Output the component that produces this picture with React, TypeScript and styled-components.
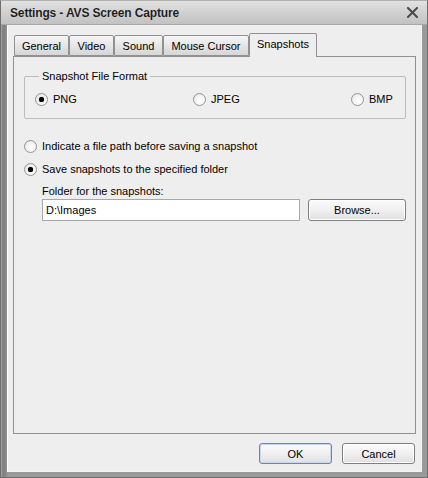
import React from "react";
import styled, { createGlobalStyle } from "styled-components";

const Global = createGlobalStyle`
  html, body { margin: 0; padding: 0; background: #8c8c8c; }
  body { font-family: "Liberation Sans", Arial, sans-serif; font-size: 11px; color: #000; }
  * { box-sizing: border-box; }
`;

const Window = styled.div`
  width: 428px;
  height: 478px;
  display: flex;
  flex-direction: column;
  background: linear-gradient(to right, #a6a6a6 0, #7e7e7e 2px, #8a8a8a 5px, #9a9a9a 7px);
  border: 1px solid #6e6e6e;
  border-top-color: #b0b0b0;
`;

const TitleBar = styled.div`
  height: 24px;
  flex: none;
  display: flex;
  align-items: center;
  justify-content: space-between;
  padding: 0 8px 0 9px;
  background: linear-gradient(to bottom, #e2e2e2 0%, #d2d2d2 45%, #c2c2c2 100%);
  border-bottom: 1px solid #a8a8a8;
`;

const Title = styled.span`
  font-weight: bold;
  font-size: 12px;
  letter-spacing: -0.15px;
  color: #1e1e1e;
  text-shadow: 0 0 1px rgba(255, 255, 255, 0.6);
`;

const Close = styled.button`
  width: 14px;
  height: 14px;
  padding: 0;
  border: 0;
  background: none;
  display: flex;
  align-items: center;
  justify-content: center;
`;

const FrameBody = styled.div`
  flex: 1;
  display: flex;
  padding: 0 6px 5px 6px;
`;

const Client = styled.div`
  flex: 1;
  display: flex;
  flex-direction: column;
  background: #eeeeee;
  border: 1px solid #ffffff;
  border-top: 0;
  border-right-color: #f4f4f4;
  border-bottom-color: #f4f4f4;
  padding: 8px 5px 7px 5px;
`;

const TabStrip = styled.div`
  display: flex;
  align-items: flex-end;
  height: 23px;
  padding-left: 1px;
  position: relative;
  z-index: 1;
`;

const Tab = styled.div<{ $active?: boolean; $w: number }>`
  width: ${(p) => p.$w}px;
  height: ${(p) => (p.$active ? "24px" : "21px")};
  margin-bottom: ${(p) => (p.$active ? "-1px" : "0")};
  display: flex;
  align-items: center;
  justify-content: center;
  border: 1px solid #919191;
  border-bottom: ${(p) => (p.$active ? "0" : "1px solid #919191")};
  border-radius: 2px 2px 0 0;
  background: ${(p) =>
    p.$active ? "#eeeeee" : "linear-gradient(to bottom, #f6f6f6 0%, #e6e6e6 50%, #d6d6d6 100%)"};
  color: #000;
  padding-bottom: ${(p) => (p.$active ? "3px" : "0")};
`;

const Panel = styled.div`
  height: 378px;
  border: 1px solid #919191;
  background: #eeeeee;
  padding: 13px 9px 0 10px;
  display: flex;
  flex-direction: column;
`;

const Group = styled.fieldset`
  margin: 0;
  padding: 10px 0 0 10px;
  height: 49px;
  border: 1px solid #bcbcbc;
  border-radius: 2px;
`;

const Legend = styled.legend`
  padding: 0 3px 0 3px;
  margin-left: 4px;
  line-height: 13px;
`;

const FormatRow = styled.div`
  display: grid;
  grid-template-columns: 158px 158px auto;
  align-items: center;
`;

const RadioLabel = styled.label`
  display: flex;
  align-items: center;
  gap: 5px;
  height: 13px;
  line-height: 13px;
  white-space: nowrap;
`;

const RadioCircle = styled.span<{ $checked?: boolean }>`
  width: 13px;
  height: 13px;
  border-radius: 50%;
  border: 1px solid #949494;
  background: radial-gradient(circle at 60% 65%, #ffffff 0%, #f6f6f6 45%, #dcdcdc 100%);
  display: flex;
  align-items: center;
  justify-content: center;
  flex: none;
  &::after {
    content: "";
    display: ${(p) => (p.$checked ? "block" : "none")};
    width: 5px;
    height: 5px;
    border-radius: 50%;
    background: #000;
    box-shadow: 0 0 1px #333;
  }
`;

const Options = styled.div`
  display: flex;
  flex-direction: column;
  gap: 10px;
  margin-top: 21px;
`;

const FolderBlock = styled.div`
  display: flex;
  flex-direction: column;
  padding-left: 18px;
  margin-top: 9px;
`;

const FolderLabel = styled.div`
  line-height: 13px;
  margin-bottom: 1px;
`;

const FolderRow = styled.div`
  display: flex;
  gap: 8px;
`;

const PathInput = styled.div`
  width: 258px;
  height: 22px;
  border: 1px solid #a8a8a8;
  background: #ffffff;
  padding: 0 3px;
  display: flex;
  align-items: center;
`;

const Button = styled.button<{ $default?: boolean }>`
  height: 22px;
  font-family: "Liberation Sans", Arial, sans-serif;
  font-size: 11px;
  color: #000;
  border: 1px solid ${(p) => (p.$default ? "#6a86b4" : "#7f7f7f")};
  border-radius: 3px;
  background: linear-gradient(to bottom, #fbfbfb 0%, #f0f0f0 50%, #e0e0e0 100%);
  box-shadow: inset 0 0 0 1px ${(p) => (p.$default ? "#c8d6ec" : "#ffffff")};
  padding: 0;
`;

const BrowseButton = styled(Button)`
  width: 98px;
`;

const Footer = styled.div`
  display: flex;
  justify-content: flex-end;
  gap: 10px;
  margin-top: 9px;
  padding-right: 1px;
`;

const DialogButton = styled(Button)`
  width: 73px;
  height: 21px;
`;

function Radio({ checked, children }: { checked?: boolean; children: React.ReactNode }) {
  return (
    <RadioLabel>
      <RadioCircle $checked={checked} />
      <span>{children}</span>
    </RadioLabel>
  );
}

const tabs: { label: string; width: number }[] = [
  { label: "General", width: 55 },
  { label: "Video", width: 45 },
  { label: "Sound", width: 49 },
  { label: "Mouse Cursor", width: 86 },
  { label: "Snapshots", width: 68 },
];

export default function App() {
  return (
    <>
      <Global />
      <Window>
        <TitleBar>
          <Title>Settings - AVS Screen Capture</Title>
          <Close aria-label="Close">
            <svg width="11" height="11" viewBox="0 0 11 11">
              <path d="M1 1 L10 10 M10 1 L1 10" stroke="#4a4a4a" strokeWidth="2" strokeLinecap="square" />
            </svg>
          </Close>
        </TitleBar>
        <FrameBody>
          <Client>
            <TabStrip>
              {tabs.map((t) => (
                <Tab key={t.label} $w={t.width} $active={t.label === "Snapshots"}>
                  {t.label}
                </Tab>
              ))}
            </TabStrip>
            <Panel>
              <Group>
                <Legend>Snapshot File Format</Legend>
                <FormatRow>
                  <Radio checked>PNG</Radio>
                  <Radio>JPEG</Radio>
                  <Radio>BMP</Radio>
                </FormatRow>
              </Group>
              <Options>
                <Radio>Indicate a file path before saving a snapshot</Radio>
                <Radio checked>Save snapshots to the specified folder</Radio>
              </Options>
              <FolderBlock>
                <FolderLabel>Folder for the snapshots:</FolderLabel>
                <FolderRow>
                  <PathInput>D:\Images</PathInput>
                  <BrowseButton>Browse...</BrowseButton>
                </FolderRow>
              </FolderBlock>
            </Panel>
            <Footer>
              <DialogButton $default>OK</DialogButton>
              <DialogButton>Cancel</DialogButton>
            </Footer>
          </Client>
        </FrameBody>
      </Window>
    </>
  );
}
